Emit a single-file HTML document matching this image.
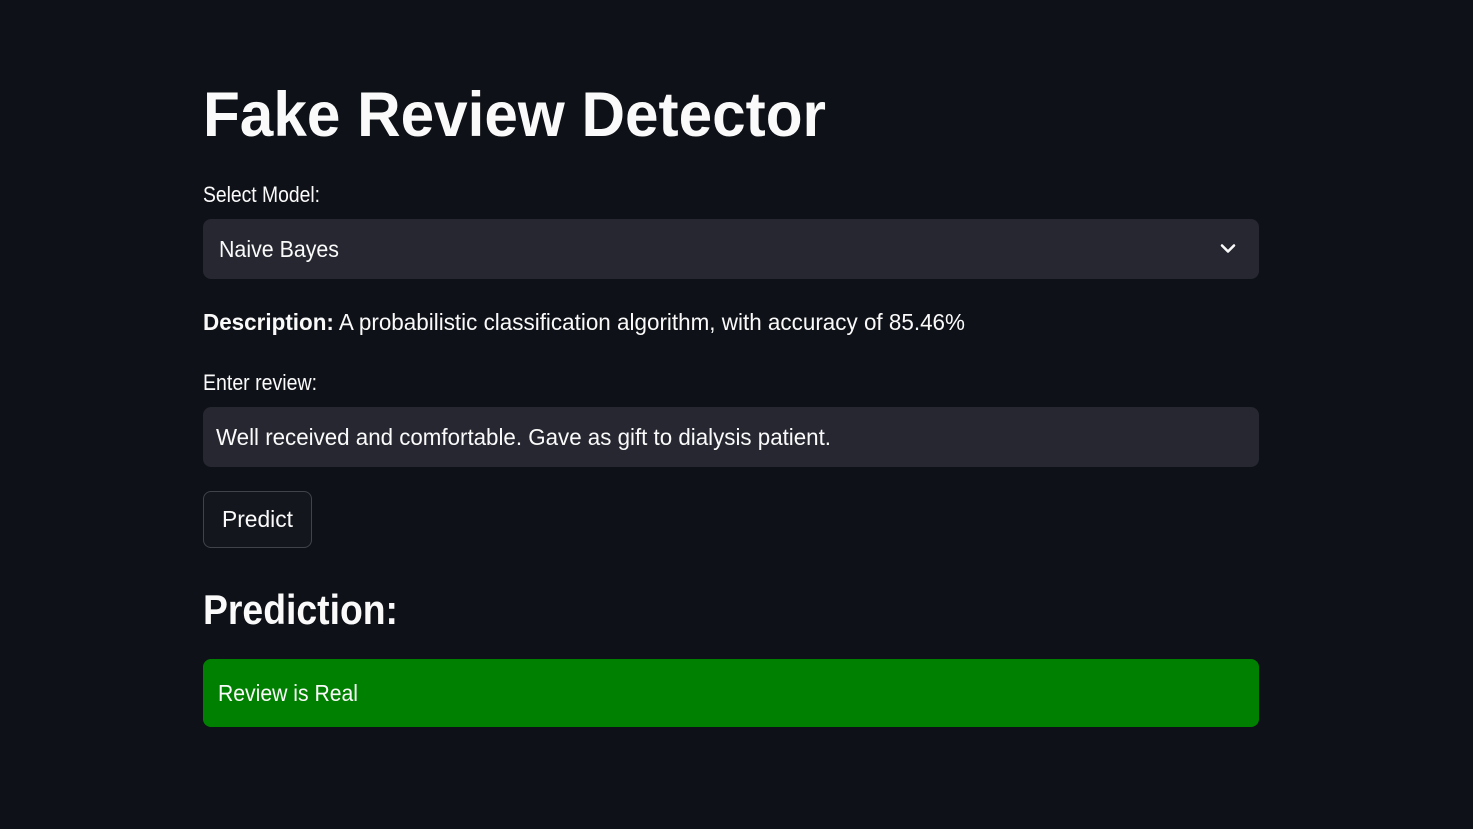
<!DOCTYPE html>
<html><head><meta charset="utf-8"><style>
html,body{margin:0;padding:0;width:1473px;height:829px;background:#0e1117;overflow:hidden}
body{position:relative;font-family:"Liberation Sans",sans-serif;color:#fafafa}
.t{position:absolute;white-space:nowrap;line-height:1;transform-origin:0 0;display:inline-block}
.box{position:absolute;border-radius:8px}
</style></head><body>
<div class="t" id="a" style="left:203px;top:84px;font-size:63px;font-weight:bold">Fake Review Detector</div>
<div class="t" id="b" style="left:203px;top:184px;font-size:22px">Select Model:</div>
<div class="box" style="left:203px;top:219px;width:1056px;height:60px;background:#262730"></div>
<div class="t" id="c" style="left:219px;top:238px;font-size:23px">Naive Bayes</div>
<svg style="position:absolute;left:1219px;top:243px" width="18" height="12" viewBox="0 0 18 12"><path d="M3 2.5 L9 8.5 L15 2.5" stroke="#fafafa" stroke-width="2.6" fill="none" stroke-linecap="round" stroke-linejoin="round"/></svg>
<div class="t" id="d" style="left:203px;top:311px;font-size:23px"><b>Description:</b> A probabilistic classification algorithm, with accuracy of 85.46%</div>
<div class="t" id="e" style="left:203px;top:372px;font-size:22px">Enter review:</div>
<div class="box" style="left:203px;top:407px;width:1056px;height:60px;background:#262730"></div>
<div class="t" id="f" style="left:216px;top:426px;font-size:23px">Well received and comfortable. Gave as gift to dialysis patient.</div>
<div class="box" style="left:203px;top:491px;width:107px;height:55px;border:1px solid rgba(250,250,250,0.2);background:#13161d"></div>
<div class="t" id="g" style="left:222px;top:508px;font-size:23px">Predict</div>
<div class="t" id="h" style="left:203px;top:589px;font-size:42px;font-weight:bold">Prediction:</div>
<div class="box" style="left:203px;top:659px;width:1056px;height:68px;background:#008000"></div>
<div class="t" id="i" style="left:218px;top:682px;font-size:23px">Review is Real</div>
<script>
var W={a:623,b:117,c:120,d:762,e:114,f:615,g:71,h:195,i:140};
for(var k in W){var el=document.getElementById(k);var w=el.getBoundingClientRect().width;el.style.transform="scaleX("+(W[k]/w)+")";}
</script>
</body></html>
